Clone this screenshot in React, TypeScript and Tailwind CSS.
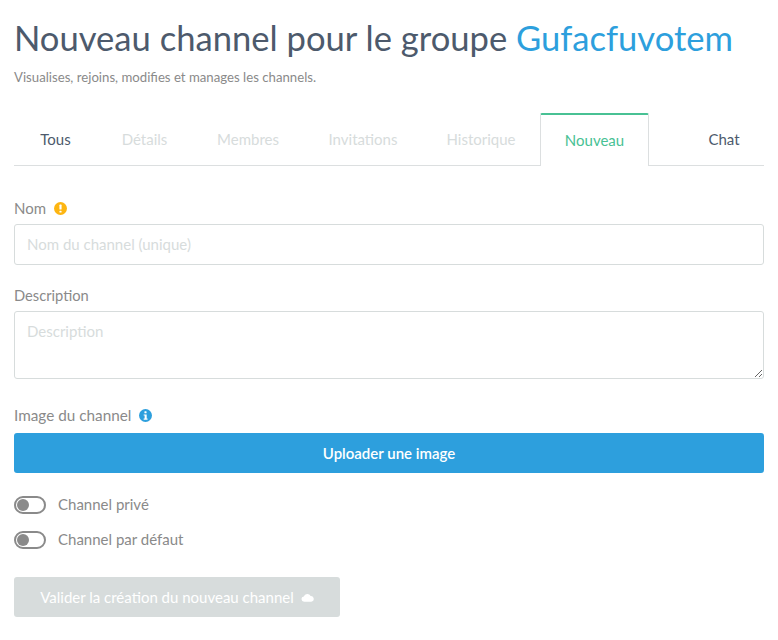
import React from 'react';

const FONT = "font-['Lato','Noto_Sans',sans-serif]";

const tabs = [
  { label: 'Tous', width: 'w-[83px]', color: 'text-[#4d5a6c]' },
  { label: 'Détails', width: 'w-[95px]', color: 'text-[#d7dcdc]' },
  { label: 'Membres', width: 'w-[112px]', color: 'text-[#d7dcdc]' },
  { label: 'Invitations', width: 'w-[118px]', color: 'text-[#d7dcdc]' },
  { label: 'Historique', width: 'w-[118px]', color: 'text-[#d7dcdc]' },
];

function Toggle({ label }: { label: string }) {
  return (
    <label className="flex items-center gap-3 h-[18px]">
      <span className="w-[32px] h-[18px] rounded-full border-2 border-[#8a8a8a] flex items-center pl-[1px] bg-white">
        <span className="w-[12px] h-[12px] rounded-full bg-[#8a8a8a]" />
      </span>
      <span className="text-[15px] text-[#8a8a8a] -mt-[2px]">{label}</span>
    </label>
  );
}

export default function App() {
  return (
    <div className={`${FONT} bg-white min-h-[640px] px-[14px] pt-[14px]`}>
      <h1 className="text-[34.6px] leading-[48px] font-normal text-[#4d5a6c]">
        Nouveau channel pour le groupe <span className="text-[#2d9fdd]">Gufacfuvotem</span>
      </h1>
      <p className="text-[13.2px] leading-[18px] text-[#8a8a8a] mt-[6px]">
        Visualises, rejoins, modifies et manages les channels.
      </p>

      <div className="flex mt-[27px] h-[53px] text-[15px] border-b border-[#dcdfe0]">
        {tabs.map((t) => (
          <div key={t.label} className={`${t.width} flex items-center justify-center ${t.color} h-[52px] pt-[1px]`}>
            {t.label}
          </div>
        ))}
        <div className="w-[109px] h-[53px] flex items-center justify-center bg-white text-[#48c194] border-t-2 border-t-[#48c194] border-x border-x-[#dcdfe0] rounded-t-[2px]">
          Nouveau
        </div>
        <div className="w-[35px]" />
        <div className="w-[80px] h-[52px] pt-[1px] flex items-center justify-center text-[#4d5a6c]">Chat</div>
      </div>

      <div className="mt-[32px] flex items-center gap-[8px] h-[20px] text-[15px] text-[#8a8a8a]">
        Nom
        <svg viewBox="0 0 12 12" className="w-[13px] h-[13px] mt-[1px]">
          <circle cx="6" cy="6" r="6" fill="#fdb511" />
          <rect x="5" y="2.4" width="2" height="4.6" rx="0.6" fill="#fff" />
          <rect x="5" y="8" width="2" height="1.8" rx="0.5" fill="#fff" />
        </svg>
      </div>
      <input
        placeholder="Nom du channel (unique)"
        className="block w-full h-[41px] mt-[6px] px-3 pb-[2px] text-[15px] border border-[#d7dcdc] rounded-[3px] outline-none placeholder:text-[#d7dcdc]"
      />

      <div className="mt-[20px] h-[20px] flex items-center text-[14.7px] text-[#8a8a8a]">Description</div>
      <textarea
        placeholder="Description"
        className="block w-full h-[68px] mt-[6px] px-3 py-[8px] text-[15px] border border-[#d7dcdc] rounded-[3px] outline-none placeholder:text-[#d7dcdc]"
      />

      <div className="mt-[26px] flex items-center gap-[8px] h-[20px] text-[15.3px] text-[#8a8a8a]">
        Image du channel
        <svg viewBox="0 0 12 12" className="w-[13px] h-[13px] mt-[1px]">
          <circle cx="6" cy="6" r="6" fill="#2d9fdd" />
          <rect x="5" y="2" width="2" height="1.9" rx="0.5" fill="#fff" />
          <path d="M4.3 5h2.8v3.8h.8v1.1H4.3V8.8h.9V6.1h-.9z" fill="#fff" />
        </svg>
      </div>
      <button className="block w-full h-[40px] mt-[8px] bg-[#2d9fdd] rounded-[3px] text-white text-[15px] font-semibold">
        Uploader une image
      </button>

      <div className="mt-[23px] flex flex-col gap-[17px]">
        <Toggle label="Channel privé" />
        <Toggle label="Channel par défaut" />
      </div>

      <button className="mt-[28px] w-[326px] h-[40px] bg-[#d7dcdc] rounded-[3px] text-white text-[15px] flex items-center justify-center gap-[7px]">
        Valider la création du nouveau channel
        <svg viewBox="0 0 14 9" className="w-[13px] h-[9px] mt-[1px]">
          <path d="M3.4 9A3 3 0 0 1 .5 6.2 2.8 2.8 0 0 1 3 3.4 4 4 0 0 1 10.4 3 3 3 0 0 1 11 9z" fill="#fff" />
        </svg>
      </button>
    </div>
  );
}
